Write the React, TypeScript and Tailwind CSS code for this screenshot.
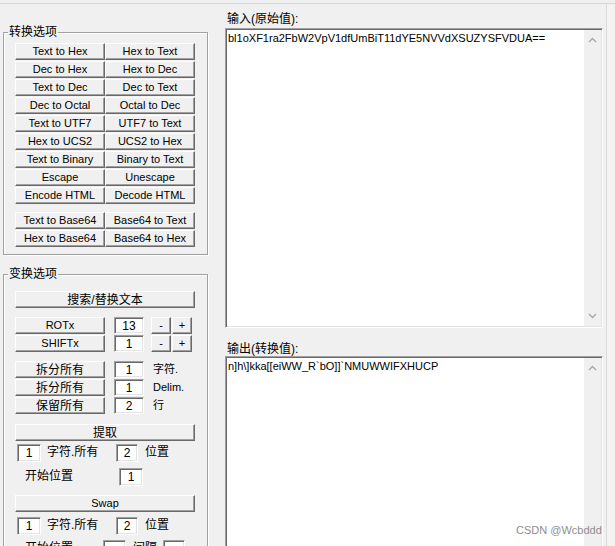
import { ReactNode } from "react";

// Classic Win32 raised button
function Btn({ children, className = "" }: { children: ReactNode; className?: string }) {
  return (
    <div
      className={`flex items-center justify-center h-[17px] shrink-0 bg-[#f0f0f0] border border-t-white border-l-white border-b-[#696969] border-r-[#696969] shadow-[inset_-1px_-1px_0_#a0a0a0] text-black leading-none ${className}`}
    >
      {children}
    </div>
  );
}

// Sunken edit box
function Edit({ value = "", className = "" }: { value?: string; className?: string }) {
  return (
    <div
      className={`flex items-center justify-center h-[17px] shrink-0 bg-white border border-t-[#a0a0a0] border-l-[#a0a0a0] border-b-white border-r-white shadow-[inset_1px_1px_0_#696969,inset_-1px_-1px_0_#e3e3e3] text-[12px] leading-none text-black ${className}`}
    >
      {value}
    </div>
  );
}

function Chevron({ up }: { up?: boolean }) {
  return (
    <svg width="9" height="6" viewBox="0 0 9 6" className="block">
      <polyline
        points={up ? "1,5 4.5,1.5 8,5" : "1,1 4.5,4.5 8,1"}
        fill="none"
        stroke="#a6a6a6"
        strokeWidth="1.3"
      />
    </svg>
  );
}

function TextBox({ text, height, showDown = true }: { text: string; height: string; showDown?: boolean }) {
  return (
    <div
      className={`flex ${height} bg-white border border-t-[#a0a0a0] border-l-[#a0a0a0] border-b-white border-r-white shadow-[inset_1px_1px_0_#696969,inset_-1px_-1px_0_#e3e3e3] p-[1px]`}
    >
      <div className="flex-1 pl-[1px] pt-[2px] text-[11px] leading-[13px] text-black whitespace-pre">{text}</div>
      <div className="w-[17px] bg-[#f0f0f0] flex flex-col items-center justify-between pt-[7px] pb-[7px]">
        <Chevron up />
        {showDown && <Chevron />}
      </div>
    </div>
  );
}

const convertRows: [string, string][] = [
  ["Text to Hex", "Hex to Text"],
  ["Dec to Hex", "Hex to Dec"],
  ["Text to Dec", "Dec to Text"],
  ["Dec to Octal", "Octal to Dec"],
  ["Text to UTF7", "UTF7 to Text"],
  ["Hex to UCS2", "UCS2 to Hex"],
  ["Text to Binary", "Binary to Text"],
  ["Escape", "Unescape"],
  ["Encode HTML", "Decode HTML"],
];

const base64Rows: [string, string][] = [
  ["Text to Base64", "Base64 to Text"],
  ["Hex to Base64", "Base64 to Hex"],
];

const groupBox =
  "w-[205px] border border-[#a0a0a0] shadow-[inset_1px_1px_0_#ffffff,1px_1px_0_#ffffff] px-0 m-0";
const legendCls = "ml-[4px] px-[1px] text-[12px] leading-[16px] text-black bg-[#f0f0f0]";

function ButtonGrid({ rows }: { rows: [string, string][] }) {
  return (
    <div className="ml-[11px] grid grid-cols-[90px_90px] gap-y-[1px]">
      {rows.map(([a, b]) => [
        <Btn key={a} className="text-[11px]">{a}</Btn>,
        <Btn key={b} className="text-[11px]">{b}</Btn>,
      ])}
    </div>
  );
}

export default function App() {
  return (
    <div className="relative w-[615px] h-[546px] overflow-hidden bg-[#f0f0f0] font-['Liberation_Sans','Noto_Sans_CJK_SC',sans-serif]">
      <div className="h-[3px]" />
      <div className="h-px bg-[#d6d6d6]" />

      <div className="flex">
        {/* left column */}
        <div className="w-[210px] pl-[3px] shrink-0">
          <fieldset className={`${groupBox} mt-[20px] pt-[3px] pb-[7px]`}>
            <legend className={legendCls}>转换选项</legend>
            <ButtonGrid rows={convertRows} />
            <div className="mt-[8px]">
              <ButtonGrid rows={base64Rows} />
            </div>
          </fieldset>

          <fieldset className={`${groupBox} mt-[11px] pt-[9px] pb-[20px]`}>
            <legend className={legendCls}>变换选项</legend>

            <Btn className="ml-[11px] w-[180px] text-[12px]">搜索/替换文本</Btn>

            <div className="flex h-[17px] mt-[9px] ml-[11px]">
              <Btn className="w-[90px] text-[11px]">ROTx</Btn>
              <Edit value="13" className="ml-[9px] w-[30px] h-[16px]" />
              <Btn className="ml-[7px] w-[20px] text-[11px]">-</Btn>
              <Btn className="ml-[1px] w-[20px] text-[11px]">+</Btn>
            </div>
            <div className="flex h-[17px] mt-[1px] ml-[11px]">
              <Btn className="w-[90px] text-[11px]">SHIFTx</Btn>
              <Edit value="1" className="ml-[9px] w-[30px] h-[16px]" />
              <Btn className="ml-[7px] w-[20px] text-[11px]">-</Btn>
              <Btn className="ml-[1px] w-[20px] text-[11px]">+</Btn>
            </div>

            {[
              ["拆分所有", "1", "字符."],
              ["拆分所有", "1", "Delim."],
              ["保留所有", "2", "行"],
            ].map(([b, v, l], i) => (
              <div key={i} className={`flex items-start h-[17px] ml-[11px] ${i === 0 ? "mt-[9px]" : "mt-[1px]"}`}>
                <Btn className="w-[90px] text-[12px]">{b}</Btn>
                <Edit value={v} className="ml-[9px] w-[30px] h-[16px]" />
                <span className="ml-[9px] text-[11px] leading-[17px]">{l}</span>
              </div>
            ))}

            <Btn className="ml-[11px] mt-[10px] w-[180px] text-[12px]">提取</Btn>

            <div className="flex items-center h-[17px] mt-[3px] ml-[13px]">
              <Edit value="1" className="w-[24px] h-[18px]" />
              <span className="w-[75px] pl-[6px] text-[12px] leading-[17px]">字符.所有</span>
              <Edit value="2" className="w-[22px] h-[18px]" />
              <span className="ml-[7px] text-[12px] leading-[17px]">位置</span>
            </div>
            <div className="flex items-center h-[17px] mt-[7px] ml-[21px]">
              <span className="w-[94px] text-[12px] leading-[17px]">开始位置</span>
              <Edit value="1" className="w-[24px] h-[18px]" />
            </div>

            <Btn className="ml-[11px] mt-[10px] w-[180px] text-[11px]">Swap</Btn>

            <div className="flex items-center h-[17px] mt-[5px] ml-[13px]">
              <Edit value="1" className="w-[24px] h-[18px]" />
              <span className="w-[75px] pl-[6px] text-[12px] leading-[17px]">字符.所有</span>
              <Edit value="2" className="w-[22px] h-[18px]" />
              <span className="ml-[7px] text-[12px] leading-[17px]">位置</span>
            </div>
            <div className="flex items-center h-[17px] mt-[6px] ml-[21px]">
              <span className="w-[78px] text-[12px] leading-[17px]">开始位置</span>
              <Edit className="w-[23px] h-[18px]" />
              <span className="ml-[7px] w-[30px] text-[12px] leading-[17px]">间隔</span>
              <Edit className="w-[22px] h-[18px]" />
            </div>
          </fieldset>
        </div>

        {/* right column */}
        <div className="ml-[15px] w-[378px] shrink-0">
          <div className="mt-[8px] h-[14px] text-[12px] leading-[14px] pl-[2px] text-black">输入(原始值):</div>
          <div className="mt-[2px]">
            <TextBox text="bl1oXF1ra2FbW2VpV1dfUmBiT11dYE5NVVdXSUZYSFVDUA==" height="h-[300px]" />
          </div>
          <div className="mt-[14px] h-[14px] text-[12px] leading-[14px] pl-[2px] text-black">输出(转换值):</div>
          <TextBox text="n]h\]kka[[eiWW_R`bO]]`NMUWWIFXHUCP" height="h-[220px]" showDown={false} />
        </div>

        <div className="ml-[3px] w-[9px] h-[546px] border-l border-[#dcdcdc] bg-[#f3f3f3]" />
      </div>

      <div className="absolute left-[516px] top-[524px] text-[11px] leading-[13px] text-[#8e8e8e]">CSDN @Wcbddd</div>
    </div>
  );
}
